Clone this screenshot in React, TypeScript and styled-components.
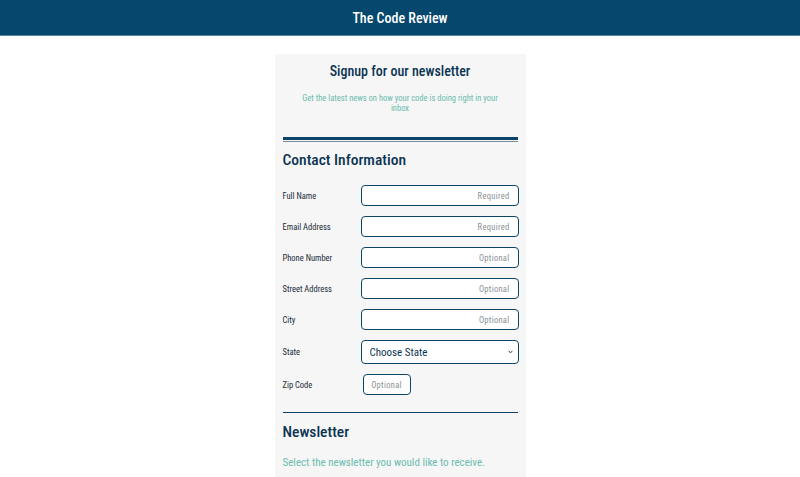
import styled, { createGlobalStyle } from "styled-components";

const GlobalStyle = createGlobalStyle`
  body {
    margin: 0;
    background: #fff;
    font-family: "Roboto Condensed", "Lato", sans-serif;
  }
`;

const dark = "#0b4466";
const navy = "#0a3452";
const teal = "#6abcae";

const Header = styled.header`
  height: 36px;
  background: #06476d;
  color: #fff;
  display: flex;
  align-items: center;
  justify-content: center;
  font-size: 14px;
  font-weight: 500;
  border-bottom: 1px solid #5a86a0;
  box-sizing: border-box;
`;

const Card = styled.main`
  width: 251px;
  margin: 18px auto 0;
  background: #f6f6f6;
  padding: 8px 8px 20px;
  box-sizing: border-box;
  color: #0b2d47;
`;

const Title = styled.h1`
  margin: 0;
  text-align: center;
  font-size: 14px;
  line-height: 19px;
  font-weight: 500;
  color: ${navy};
`;

const Subtitle = styled.p`
  margin: 12px 12px 0;
  text-align: center;
  font-size: 8.5px;
  line-height: 10px;
  color: ${teal};
`;

const DoubleRule = styled.div`
  margin-top: 24px;
  height: 5px;
  box-sizing: border-box;
  border-top: 3px solid ${dark};
  border-bottom: 1px solid #6f8fa3;
`;

const SectionTitle = styled.h2<{ $gap: number }>`
  margin: ${(p) => p.$gap}px 0 0;
  font-size: 15.5px;
  line-height: 20px;
  font-weight: 500;
  color: ${navy};
`;

const Form = styled.form`
  margin-top: 15px;
  display: flex;
  flex-direction: column;
  gap: 10px;
`;

const Row = styled.label`
  display: grid;
  grid-template-columns: 78px 1fr;
  align-items: center;
  font-size: 8.5px;
  color: #1c2a36;
`;

const Input = styled.input<{ $narrow?: boolean }>`
  box-sizing: border-box;
  width: ${(p) => (p.$narrow ? "48px" : "158px")};
  margin-left: ${(p) => (p.$narrow ? "2px" : "0")};
  height: 21px;
  border: 1.5px solid ${dark};
  border-radius: 4px;
  background: #fff;
  font-family: inherit;
  font-size: 8.5px;
  padding: 0 ${(p) => (p.$narrow ? "3px" : "8px")};
  text-align: ${(p) => (p.$narrow ? "center" : "right")};
  color: #333;
  &::placeholder {
    color: #8a8f93;
    letter-spacing: 0.3px;
  }
`;

const SelectWrap = styled.div`
  position: relative;
  width: 158px;
  height: 24px;
`;

const Select = styled.select`
  appearance: none;
  box-sizing: border-box;
  width: 100%;
  height: 100%;
  border: 1.5px solid ${dark};
  border-radius: 4px;
  background: #fff;
  font-family: inherit;
  font-size: 11px;
  color: ${navy};
  padding: 0 8px;
`;

const Chevron = styled.svg`
  position: absolute;
  right: 6px;
  top: 10px;
  width: 5px;
  height: 4px;
  pointer-events: none;
`;

const Rule = styled.hr`
  margin: 17px 0 0;
  border: none;
  border-top: 1px solid ${dark};
`;

const Note = styled.p`
  margin: 14px 0 0;
  font-size: 11px;
  line-height: 14px;
  color: ${teal};
`;

const fields = [
  { label: "Full Name", hint: "Required" },
  { label: "Email Address", hint: "Required" },
  { label: "Phone Number", hint: "Optional" },
  { label: "Street Address", hint: "Optional" },
  { label: "City", hint: "Optional" },
];

export default function App() {
  return (
    <>
      <GlobalStyle />
      <Header>The Code Review</Header>
      <Card>
        <Title>Signup for our newsletter</Title>
        <Subtitle>Get the latest news on how your code is doing right in your inbox</Subtitle>
        <DoubleRule />
        <SectionTitle $gap={8}>Contact Information</SectionTitle>
        <Form>
          {fields.map((f) => (
            <Row key={f.label}>
              <span>{f.label}</span>
              <Input placeholder={f.hint} />
            </Row>
          ))}
          <Row>
            <span>State</span>
            <SelectWrap>
              <Select defaultValue="">
                <option value="">Choose State</option>
              </Select>
              <Chevron viewBox="0 0 5 4">
                <path d="M0.6 0.8 L2.5 2.9 L4.4 0.8" fill="none" stroke="#2b3a48" strokeWidth="1" />
              </Chevron>
            </SelectWrap>
          </Row>
          <Row>
            <span>Zip Code</span>
            <Input $narrow placeholder="Optional" />
          </Row>
        </Form>
        <Rule />
        <SectionTitle $gap={9}>Newsletter</SectionTitle>
        <Note>Select the newsletter you would like to receive.</Note>
      </Card>
    </>
  );
}
